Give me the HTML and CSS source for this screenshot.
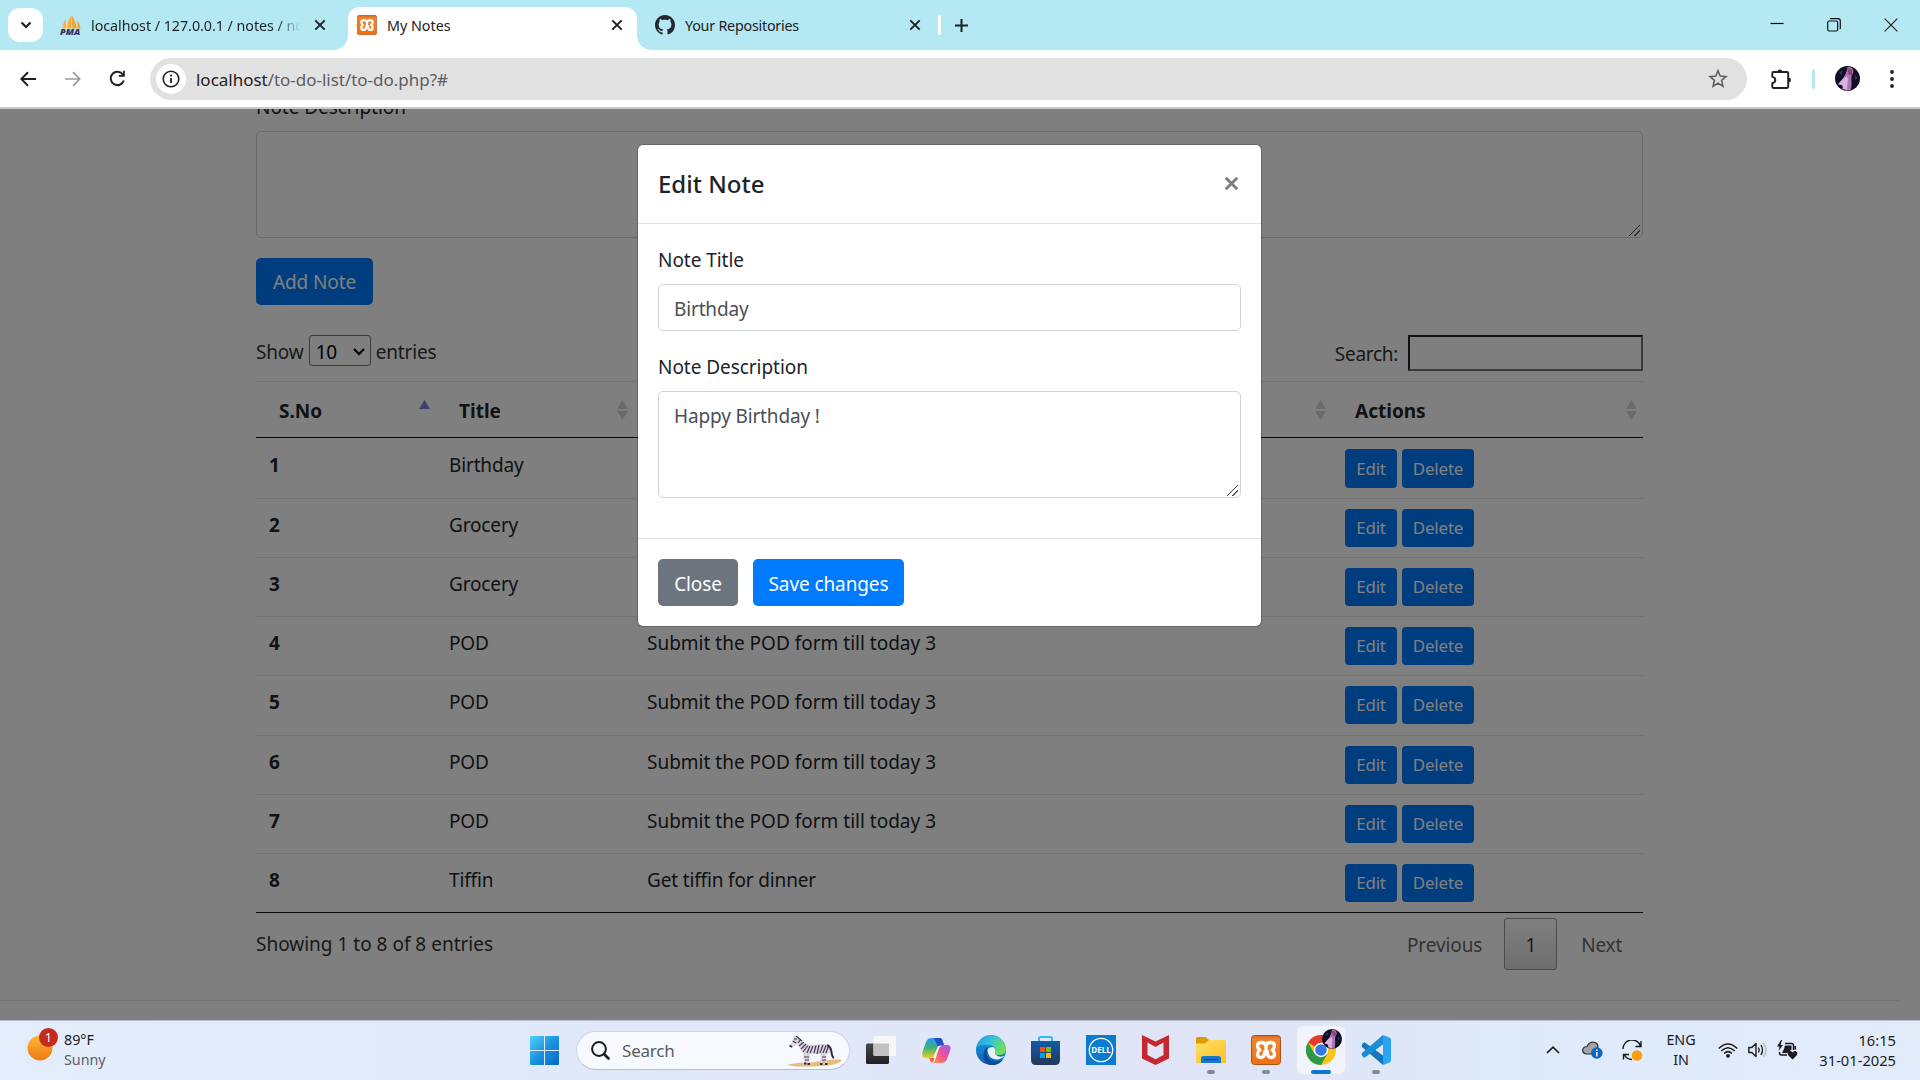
FILE: index.html
```html
<!DOCTYPE html>
<html lang="en">
<head>
<meta charset="utf-8">
<title>My Notes</title>
<link rel="stylesheet" href="styles.css">
</head>
<body>
<svg class="defs" width="0" height="0" aria-hidden="true">
  <defs>
    <linearGradient id="gOrange" x1="0" y1="0" x2="0" y2="1"><stop offset="0" stop-color="#c8672a"/><stop offset=".12" stop-color="#f0832f"/><stop offset="1" stop-color="#f3700f"/></linearGradient>
    <linearGradient id="gSail" x1="0" y1="0" x2="1" y2="0"><stop offset="0" stop-color="#f6e3c0"/><stop offset="1" stop-color="#f89c0e"/></linearGradient>
    <linearGradient id="gWin" x1="0" y1="0" x2="1" y2="1"><stop offset="0" stop-color="#4fd0fb"/><stop offset=".5" stop-color="#1a93e0"/><stop offset="1" stop-color="#0468c8"/></linearGradient>
    <linearGradient id="gCopA" x1="0" y1="0" x2="0" y2="1"><stop offset="0" stop-color="#1f9bf0"/><stop offset=".5" stop-color="#3fb274"/><stop offset="1" stop-color="#f5cf1c"/></linearGradient>
    <linearGradient id="gCopB" x1="1" y1="0" x2="0" y2="1"><stop offset="0" stop-color="#9a5cf0"/><stop offset=".55" stop-color="#f0568c"/><stop offset="1" stop-color="#ff9a4a"/></linearGradient>
    <linearGradient id="gEdge" x1="0" y1="0" x2="1" y2=".4"><stop offset="0" stop-color="#1b9de2"/><stop offset=".5" stop-color="#35c1d8"/><stop offset="1" stop-color="#6fe05c"/></linearGradient>
    <linearGradient id="gEdge2" x1="0" y1="0" x2="0" y2="1"><stop offset="0" stop-color="#1ba0e2"/><stop offset="1" stop-color="#0a5fc0"/></linearGradient>
    <linearGradient id="gStore" x1="0" y1="0" x2="0" y2="1"><stop offset="0" stop-color="#0f5cab"/><stop offset="1" stop-color="#253858"/></linearGradient>
    <linearGradient id="gFolder" x1="0" y1="0" x2="1" y2="1"><stop offset="0" stop-color="#ffdf6d"/><stop offset="1" stop-color="#fdc021"/></linearGradient>
    <linearGradient id="gDark" x1="0" y1="0" x2="0" y2="1"><stop offset="0" stop-color="#474747"/><stop offset="1" stop-color="#1f1f1f"/></linearGradient>
    <linearGradient id="gSun" x1="0" y1="0" x2="0" y2="1"><stop offset="0" stop-color="#fbb83a"/><stop offset="1" stop-color="#f07a10"/></linearGradient>
    <symbol id="xampp" viewBox="0 0 30 30">
      <rect x=".5" y=".5" width="29" height="29" rx="3" fill="url(#gOrange)" stroke="#a9541d"/>
      <path d="M15 10.500C13.500 6.500 6.500 6.500 6.500 11C6.500 13 7.500 14 8.800 15C7.500 16 6.500 17.500 6.500 19C6.500 23.500 12.500 23.500 13.300 19.500C13.300 17.500 13.800 16 15 16S16.700 17.500 16.700 19.500C17.500 23.500 23.500 23.500 23.500 19C23.500 17.500 22.500 16 21.200 15C22.500 14 23.500 13 23.500 11C23.500 6.500 16.500 6.500 15 10.500V13.500" fill="none" stroke="#fff" stroke-width="3.400" stroke-linecap="round" stroke-linejoin="round"/>
    </symbol>
    <symbol id="avatar" viewBox="0 0 24 24">
      <circle cx="12" cy="12" r="12" fill="#120f24"/>
      <path d="M12 1C18 0 19 6 16 9C15 13 17 17 15 23L10 24C11 19 8 18 3 18C6 13 11 10 12 1Z" fill="#a974b8"/>
      <path d="M11 10C14 11 11 18 12 23L7 22C9 18 5 18 3 17C6 15 8 11 11 10Z" fill="#dbb3dc"/>
      <path d="M12 3C15 1 18 5 16 9L13 8Z" fill="#8e4468"/>
      <path d="M19 8L22 12L19 13ZM4 6L8 4L6 9Z" fill="#2d3368"/>
    </symbol>
    <symbol id="cross" viewBox="0 0 12 12"><path d="M1.300 1.300L10.700 10.700M10.700 1.300L1.300 10.700" stroke="#1f2023" stroke-width="1.900" fill="none"/></symbol>
  </defs>
</svg>

<div class="screen">
  <header class="tabstrip">
    <button class="tab-search"><svg width="12" height="8" viewBox="0 0 12 8"><path d="M1.500 1.500L6 6L10.500 1.500" fill="none" stroke="#1f2023" stroke-width="2.200"/></svg></button>
    <div class="tab tab-pma">
      <svg class="fav" width="21" height="21" viewBox="0 0 21 21"><path d="M8 1L1.500 13.500H8Z" fill="url(#gSail)" transform="translate(3 0)"/><path d="M5.500 4L1 13.500H5.500Z" fill="url(#gSail)"/><path d="M11.500 0L12.500 13.500H17C16 9 14 4 11.500 0ZM17 5L18 13.500H20.500C20 10 19 7 17 5Z" fill="#f5a02c"/><text x="0" y="20" class="pma" textLength="20" lengthAdjust="spacingAndGlyphs">PMA</text></svg>
      <span class="tab-title fade">localhost / 127.0.0.1 / notes / notes</span>
      <svg class="tab-x" width="12" height="12"><use href="#cross"/></svg>
    </div>
    <div class="tab tab-active">
      <svg class="fav" width="20" height="20"><use href="#xampp"/></svg>
      <span class="tab-title">My Notes</span>
      <svg class="tab-x" width="12" height="12"><use href="#cross"/></svg>
    </div>
    <div class="tab tab-git">
      <svg class="fav" width="20" height="20" viewBox="0 0 16 16"><path fill="#24292f" d="M8 0C3.580 0 0 3.580 0 8c0 3.540 2.290 6.530 5.470 7.590.4.070.55-.17.55-.38 0-.19-.01-.82-.01-1.490-2.010.37-2.530-.49-2.690-.94-.09-.23-.48-.94-.82-1.130-.28-.15-.68-.52-.01-.53.63-.01 1.080.58 1.230.82.72 1.210 1.870.87 2.330.66.07-.52.28-.87.51-1.070-1.780-.2-3.640-.89-3.640-3.950 0-.87.31-1.590.82-2.150-.08-.2-.36-1.020.08-2.120 0 0 .67-.21 2.200.82.64-.18 1.320-.27 2-.27s1.360.09 2 .27c1.530-1.040 2.200-.82 2.200-.82.44 1.100.16 1.920.08 2.120.51.56.82 1.270.82 2.150 0 3.070-1.870 3.750-3.650 3.950.29.25.54.73.54 1.480 0 1.070-.01 1.930-.01 2.200 0 .21.15.46.55.38A8.010 8.010 0 0 0 16 8c0-4.420-3.580-8-8-8z"/></svg>
      <span class="tab-title">Your Repositories</span>
      <svg class="tab-x" width="12" height="12"><use href="#cross"/></svg>
    </div>
    <i class="tab-sep"></i>
    <svg class="new-tab" width="13" height="13" viewBox="0 0 13 13"><path d="M6.500 0V13M0 6.500H13" stroke="#1f2023" stroke-width="2"/></svg>
    <div class="win-controls">
      <svg width="14" height="14" viewBox="0 0 14 14"><path d="M.5 5.500H13.500" stroke="#000" stroke-width="1.200"/></svg>
      <svg width="14" height="14" viewBox="0 0 14 14"><rect x=".7" y="3" width="10" height="10" rx="1.500" fill="none" stroke="#111" stroke-width="1.200"/><path d="M3 .7H11Q13.300 .7 13.300 3V11" fill="none" stroke="#111" stroke-width="1.200"/></svg>
      <svg width="14" height="14" viewBox="0 0 14 14"><path d="M.7 .7L13.300 13.300M13.300 .7L.7 13.300" stroke="#222" stroke-width="1.200"/></svg>
    </div>
  </header>

  <nav class="toolbar">
    <svg class="nav-back" width="16" height="16" viewBox="0 0 16 16"><path d="M16 8H1.500M8 1.200L1.300 8L8 14.800" fill="none" stroke="#1f2023" stroke-width="2"/></svg>
    <svg class="nav-fwd" width="16" height="16" viewBox="0 0 16 16"><path d="M0 8H14.500M8 1.200L14.700 8L8 14.800" fill="none" stroke="#9b9b9b" stroke-width="1.700"/></svg>
    <svg class="nav-reload" width="17" height="17" viewBox="0 0 17 17"><path d="M14.800 10.500A6.700 6.700 0 1 1 14 4.700" fill="none" stroke="#1f2023" stroke-width="2"/><path d="M15.800 .8V6.800H9.800V5H14V.8Z" fill="#1f2023"/></svg>
    <div class="omnibox">
      <span class="site-info"><svg width="18" height="18" viewBox="0 0 18 18"><circle cx="9" cy="9" r="7.800" fill="none" stroke="#1f2023" stroke-width="1.600"/><path d="M9 8V13" stroke="#1f2023" stroke-width="1.800"/><circle cx="9" cy="5.500" r="1.100" fill="#1f2023"/></svg></span>
      <span class="url"><b>localhost</b>/to-do-list/to-do.php?#</span>
      <svg class="star" width="20" height="20" viewBox="0 0 20 20"><path d="M10 1.800L12.200 7.100L18 7.600L13.600 11.400L14.900 17.200L10 14.100L5.100 17.200L6.400 11.400L2 7.600L7.800 7.100Z" fill="none" stroke="#5f6062" stroke-width="1.600"/></svg>
    </div>
    <svg class="puzzle" width="22" height="22" viewBox="0 0 22 22"><path d="M3.500 4H17Q18.200 4 18.200 5.200V18.800Q18.200 20 17 20H3.500Q2.300 20 2.300 18.800V15.200Q5.300 14.500 5.300 12T2.300 8.700V5.200Q2.300 4 3.500 4Z" fill="none" stroke="#1f2023" stroke-width="1.900"/><path d="M7.300 4A2.500 2.500 0 0 1 12.300 4ZM18.500 9.400A2.500 2.500 0 0 1 18.500 14.400Z" fill="#1f2023"/></svg>
    <i class="tool-sep"></i>
    <svg class="profile" width="25" height="25"><use href="#avatar"/></svg>
    <svg class="dots" width="4" height="18" viewBox="0 0 4 18"><circle cx="2" cy="2" r="1.900"/><circle cx="2" cy="9" r="1.900"/><circle cx="2" cy="16" r="1.900"/></svg>
  </nav>

  <main class="viewport">
    <div class="page">
      <section class="container">
        <label class="label">Note Description</label>
        <textarea class="control area"></textarea>
        <button class="btn primary add">Add Note</button>
        <div class="table-tools">
          <div class="length">Show <span class="select">10<svg width="12" height="8" viewBox="0 0 12 8"><path d="M1 1L6 6L11 1" fill="none" stroke="#000" stroke-width="2.200"/></svg></span> entries</div>
          <div class="filter"><span>Search:</span><input type="text"></div>
        </div>
        <table>
          <colgroup><col class="c1"><col class="c2"><col class="c3"><col class="c4"></colgroup>
          <thead>
            <tr>
              <th><div>S.No<svg class="sort" width="11" height="20" viewBox="0 0 11 20"><path d="M0 9L5.500 0L11 9Z" fill="#8080e0"/></svg></div></th>
              <th><div>Title<svg class="sort" width="11" height="20" viewBox="0 0 11 20"><path d="M0 9L5.500 0L11 9ZM0 11L5.500 20L11 11Z" fill="#d4d4d4"/></svg></div></th>
              <th><div>Description<svg class="sort" width="11" height="20" viewBox="0 0 11 20"><path d="M0 9L5.500 0L11 9ZM0 11L5.500 20L11 11Z" fill="#d4d4d4"/></svg></div></th>
              <th><div>Actions<svg class="sort" width="11" height="20" viewBox="0 0 11 20"><path d="M0 9L5.500 0L11 9ZM0 11L5.500 20L11 11Z" fill="#d4d4d4"/></svg></div></th>
            </tr>
          </thead>
          <tbody>
            <tr><td><b>1</b></td><td>Birthday</td><td>Happy Birthday !</td><td class="act"><button class="btn sm primary">Edit</button><button class="btn sm primary del">Delete</button></td></tr>
            <tr><td><b>2</b></td><td>Grocery</td><td></td><td class="act"><button class="btn sm primary">Edit</button><button class="btn sm primary del">Delete</button></td></tr>
            <tr><td><b>3</b></td><td>Grocery</td><td></td><td class="act"><button class="btn sm primary">Edit</button><button class="btn sm primary del">Delete</button></td></tr>
            <tr><td><b>4</b></td><td>POD</td><td>Submit the POD form till today 3</td><td class="act"><button class="btn sm primary">Edit</button><button class="btn sm primary del">Delete</button></td></tr>
            <tr><td><b>5</b></td><td>POD</td><td>Submit the POD form till today 3</td><td class="act"><button class="btn sm primary">Edit</button><button class="btn sm primary del">Delete</button></td></tr>
            <tr><td><b>6</b></td><td>POD</td><td>Submit the POD form till today 3</td><td class="act"><button class="btn sm primary">Edit</button><button class="btn sm primary del">Delete</button></td></tr>
            <tr><td><b>7</b></td><td>POD</td><td>Submit the POD form till today 3</td><td class="act"><button class="btn sm primary">Edit</button><button class="btn sm primary del">Delete</button></td></tr>
            <tr><td><b>8</b></td><td>Tiffin</td><td>Get tiffin for dinner</td><td class="act"><button class="btn sm primary">Edit</button><button class="btn sm primary del">Delete</button></td></tr>
          </tbody>
        </table>
        <div class="table-foot">
          <span>Showing 1 to 8 of 8 entries</span>
          <div class="pager"><span class="pg">Previous</span><span class="pg current">1</span><span class="pg next">Next</span></div>
        </div>
      </section>
      <div class="rule"></div>
    </div>
    <div class="backdrop">
      <div class="modal">
        <div class="modal-head"><h5>Edit Note</h5><svg width="15" height="15" viewBox="0 0 14 14"><path d="M1.600 1.600L12.400 12.400M12.400 1.600L1.600 12.400" stroke="#7f7f7f" stroke-width="2.800"/></svg></div>
        <div class="modal-body">
          <label class="label">Note Title</label>
          <input class="control" type="text" value="Birthday">
          <label class="label second">Note Description</label>
          <textarea class="control area">Happy Birthday !</textarea>
        </div>
        <div class="modal-foot"><button class="btn secondary">Close</button><button class="btn primary save">Save changes</button></div>
      </div>
    </div>
  </main>

  <footer class="taskbar">
    <div class="weather">
      <div class="sun"><svg width="26" height="26" viewBox="0 0 26 26"><circle cx="13" cy="13" r="12.500" fill="url(#gSun)"/></svg><span class="badge">1</span></div>
      <div class="wtext"><span>89°F</span><span class="dim">Sunny</span></div>
    </div>
    <div class="apps">
      <svg class="a-win" width="29" height="29" viewBox="0 0 29 29"><path d="M1 0H14V14H0V1Q0 0 1 0ZM15 0H28Q29 0 29 1V14H15ZM0 15H14V29H1Q0 29 0 28ZM15 15H29V28Q29 29 28 29H15Z" fill="url(#gWin)"/></svg>
      <div class="search">
        <svg width="19" height="19" viewBox="0 0 19 19"><circle cx="8" cy="8" r="6.900" fill="none" stroke="#1b1b1b" stroke-width="2"/><path d="M13 13L17.500 17.500" stroke="#1b1b1b" stroke-width="2.600" stroke-linecap="round"/></svg>
        <span>Search</span>
        <svg class="zebra" width="55" height="33" viewBox="0 0 55 33">
          <path d="M0 30.500Q10 28 24 28.500Q38 25 53 25.500Q55 28 46 30.500Q30 33 10 32.500Q1 32 0 30.500Z" fill="#e6bc7d"/>
          <path d="M7 1L10 3Q14 6 17 10Q25 12 33 10Q40 9 42 15Q46 20 45 24L42 18Q40 20 38 21L39 30H37L35 22L34 30H32L33 20H22L21 30H19L19 22L18 30H16L15 19Q12 15 10 10L5 13Q2 14 2 12L5 5Q5 2 7 1Z" fill="#dcd5df"/>
          <path d="M8 2L14 7M10 9L13 5M11 12L16 8M13 15L18 10M15 18L20 11.500M19 19L22 12M22 19L25 12M26 19L28 11.500M29 20L31 11M32 19L35 11M35 19L38 11.500M38 19L40 13M16 23H21M17 26H21M34 23H38M34 26H38M5 7L8 9M6 5L9 5" stroke="#3e3750" stroke-width="1.200" fill="none"/>
          <path d="M39 11Q43 13 43.500 18T46 24M1.500 11.500L4 13M16 29.500H18.500M19.500 30H22M32 30H34.500M37 30H39.500" stroke="#332d46" stroke-width="2" fill="none"/>
        </svg>
      </div>
      <svg class="a-view" width="30" height="28" viewBox="0 0 30 28"><rect y="7.500" width="23" height="20.500" rx="1.500" fill="url(#gDark)"/><rect x="7.500" width="22.500" height="20" rx="1.500" fill="#f7f7f7"/><path d="M7.500 7.500H23V20H9Q7.500 20 7.500 18.500Z" fill="#c2c2c2"/></svg>
      <svg class="a-cop" width="29" height="27" viewBox="0 0 29 27"><path d="M17 6L15 13Q12 23 11 25Q9 27 7.500 22L6 18L10 9Z" fill="#f46a4e"/><path d="M10 1H18Q20 1 21 5L22 8H19Q17 8 16 11L14 18Q13 21 9 21H4Q-1 21 .5 15L4 5Q5.500 1 10 1Z" fill="url(#gCopA)"/><path d="M12 1H18Q20 1 21 5L22 8H19Q17 8 16 10Z" fill="#2350c8"/><path d="M19 26H11Q13 25 14 20L16 12Q17 8 20 8H25Q30 8 28 14L25 22Q23.500 26 19 26Z" fill="url(#gCopB)"/><path d="M16 9H19Q17 10 14 20L13 21H11Z" fill="#fff" opacity=".85"/></svg>
      <svg class="a-edge" width="30" height="30" viewBox="0 0 30 30"><circle cx="15" cy="15" r="15" fill="url(#gEdge2)"/><path d="M.5 12A15 15 0 0 1 30 14Q30 20 23 20Q18 20 19 17Q20 10 13 10Q5 9 .5 12Z" fill="url(#gEdge)"/><path d="M12 12Q8 22 16 26Q22 28 27.500 24Q22 32 13 29.500Q5 25 8 17Q9 13 12 12Z" fill="#0c4a94"/><path d="M17 12Q10 12 12 18Q14 25 22 24.500Q26 24 29 20.500Q24 23 20 20Q18.500 19 19 17Q20 14 17 12Z" fill="#eaf0fb"/></svg>
      <svg class="a-store" width="29" height="29" viewBox="0 0 29 29"><path d="M8 7V2.500Q8 1 9.500 1H19.500Q21 1 21 2.500V7" fill="none" stroke="#35b8f1" stroke-width="2"/><path d="M0 5H29V24Q29 29 24 29H5Q0 29 0 24Z" fill="url(#gStore)"/><path d="M9 11H14V16H9Z" fill="#f25022"/><path d="M15 11H20V16H15Z" fill="#7fba00"/><path d="M9 17H14V22H9Z" fill="#00a4ef"/><path d="M15 17H20V22H15Z" fill="#ffb900"/></svg>
      <svg class="a-dell" width="30" height="30" viewBox="0 0 30 30"><rect width="30" height="30" fill="#0a7bd1"/><circle cx="15" cy="15" r="11.700" fill="none" stroke="#fff" stroke-width="1.300"/><text x="15" y="18" class="dell">DELL</text></svg>
      <svg class="a-mc" width="27" height="30" viewBox="0 0 27 30"><path d="M0 0L13.500 6.500L27 0V23.500L13.500 30L0 23.500ZM5.500 7.500V20L13.500 24.200L21.500 20V7.500L13.500 12Z" fill="#c5282f"/></svg>
      <div class="app a-exp"><svg width="30" height="30" viewBox="0 0 30 30"><path d="M0 3.500Q0 2 1.500 2H9.500L13 5V9H0Z" fill="#dc9b04"/><path d="M0 8.500L9 8.500L13 5H28.500Q30 5 30 6.500V26.500Q30 28 28.500 28H1.500Q0 28 0 26.500Z" fill="url(#gFolder)"/><path d="M5 28V23.500Q5 21 7.500 21H22.500Q25 21 25 23.500V28Z" fill="#1777cb"/><path d="M8 24.500H22" stroke="#0b4c8c" stroke-width="1.200"/></svg><i></i></div>
      <div class="app a-xam"><svg width="30" height="30"><use href="#xampp"/></svg><i></i></div>
      <div class="app active"><svg width="36" height="36" viewBox="0 0 36 36"><circle cx="15" cy="21" r="15" fill="#f9c31b"/><path d="M15 21L2 13.500A15 15 0 0 1 28 13.500H15Z" fill="#e33b2e"/><path d="M2 13.500A15 15 0 0 0 15 36L21.500 24.800L15 21L8.500 24.800Z" fill="#2a9a48"/><circle cx="15" cy="21" r="7.200" fill="#fff"/><circle cx="15" cy="21" r="5.800" fill="#3479ea"/><use href="#avatar" x="16" y="0" width="20" height="20"/></svg><i></i></div>
      <div class="app a-vs"><svg width="30" height="30" viewBox="0 0 30 30"><path d="M1.500 8.500L3.500 7.300L22 20.500V30L1 12Q0 10.500 1.500 8.500Z" fill="#1277bb"/><path d="M1.500 21.500L3.500 22.700L22 9.500V0L1 18Q0 19.500 1.500 21.500Z" fill="#1a8dd6"/><path d="M22 0L28.500 2.500Q30 3.300 30 5V25Q30 26.700 28.500 27.500L22 30Z" fill="#2aa5f4"/></svg><i></i></div>
    </div>
    <div class="tray">
      <svg class="t-chev" width="14" height="8" viewBox="0 0 14 8"><path d="M1 7L7 1.200L13 7" fill="none" stroke="#1b1b1b" stroke-width="1.700"/></svg>
      <svg class="t-cloud" width="21" height="18" viewBox="0 0 21 18"><path d="M4 13Q0 12 .8 8.500Q1.500 5.500 5 5.500Q8 0 13 1.500Q16 2.500 16 6L9 13Z" fill="#a5a5a5" stroke="#333" stroke-width="1.200"/><circle cx="14.800" cy="12" r="5.800" fill="#0a66c2"/><path d="M14.800 11V15.500M14.800 8.500V10" stroke="#fff" stroke-width="1.500"/></svg>
      <svg class="t-sync" width="21" height="21" viewBox="0 0 21 21"><path d="M1 9A9 9 0 0 1 18.500 6M19 1V6.500H13.500M10 19.500A9 9 0 0 1 2 14M1.500 19.500V14.500H7" fill="none" stroke="#1b1b1b" stroke-width="1.400"/><circle cx="15" cy="15.500" r="5.300" fill="#ff9d0a"/></svg>
      <div class="lang"><span>ENG</span><span>IN</span></div>
      <svg class="t-wifi" width="20" height="15" viewBox="0 0 20 15"><path d="M.7 5.500Q10 -3.500 19.300 5.500M3.300 8Q10 1.500 16.700 8M6 10.500Q10 6.800 14 10.500" fill="none" stroke="#1b1b1b" stroke-width="1.500"/><circle cx="10" cy="12.800" r="1.900" fill="#1b1b1b"/></svg>
      <svg class="t-vol" width="20" height="16" viewBox="0 0 20 16"><path d="M.8 5.500H3.800L8 1.500V14.500L3.800 10.500H.8Z" fill="none" stroke="#1b1b1b" stroke-width="1.400" stroke-linejoin="round"/><path d="M10.500 5.500Q12 8 10.500 10.500M13 3Q16 8 13 13" fill="none" stroke="#1b1b1b" stroke-width="1.400"/><path d="M15.500 1Q20.500 8 15.500 15" fill="none" stroke="#b4bcc9" stroke-width="1.400"/></svg>
      <svg class="t-bat" width="21" height="20" viewBox="0 0 21 20"><path d="M8 3.500H14.500Q16.500 3.500 16.500 5.500V10M18.300 6V9.500M2.500 12V13Q2.500 15 4.500 15H10" fill="none" stroke="#1b1b1b" stroke-width="1.500"/><path d="M8 5.500H14.500V9.500L10.500 13H5L7 9Z" fill="#1b1b1b"/><path d="M4 0L0 6.500H2.500L1.500 11L6 5H3.500L5 0Z" fill="#1b1b1b"/><path d="M15.500 19.500L11 15Q10 12 12.500 11Q14.500 10.500 15.500 12.500Q16.500 10.500 18.500 11Q21 12 20 15Z" fill="#1b1b1b"/></svg>
      <div class="clock"><span>16:15</span><span>31-01-2025</span></div>
    </div>
  </footer>
</div>
</body>
</html>
```

FILE: styles.css
```css
* { box-sizing: border-box; }
body { margin: 0; font-family: "Noto Sans", "Open Sans", sans-serif; color: #212529; overflow: hidden; }
svg { display: block; flex: none; }
button { font: inherit; border: 0; padding: 0; }
.defs { position: absolute; }
.screen { width: 1920px; height: 1080px; display: flex; flex-direction: column; overflow: hidden; }

/* Tab strip */
.tabstrip { height: 50px; flex: none; background: #b4e8f2; display: flex; align-items: flex-start; padding-left: 8px; }
.tab-search { width: 35px; height: 34px; margin-top: 8px; border-radius: 12px; background: #fff; display: grid; place-items: center; }
.tab { height: 43px; margin-top: 7px; display: flex; align-items: center; padding-bottom: 7px; font-size: 14.300px; color: #1f2023; }
.tab-pma { width: 305px; padding-left: 17px; padding-top: 0; letter-spacing: -.04px; }
.tab-title { margin-left: 10px; white-space: nowrap; overflow: hidden; flex: 1; padding-top: 1px; }
.fade { flex: none; width: 210px; -webkit-mask-image: linear-gradient(90deg, #000 88%, transparent); mask-image: linear-gradient(90deg, #000 88%, transparent); }
.fade + .tab-x { margin-left: 13px; }
.pma { font: italic 800 8.500px "Open Sans", sans-serif; fill: #34336b; }
.tab-active { position: relative; width: 289px; background: #fff; border-radius: 12px 12px 0 0; padding-left: 9px; padding-right: 14px; }
.tab-active::before, .tab-active::after { content: ""; position: absolute; bottom: 0; width: 14px; height: 14px; }
.tab-active::before { left: -14px; background: radial-gradient(circle at 0 0, #b4e8f2 13.500px, #fff 14px); }
.tab-active::after { right: -14px; background: radial-gradient(circle at 100% 0, #b4e8f2 13.500px, #fff 14px); }
.tab-git { width: 301px; padding-left: 18px; padding-right: 17px; letter-spacing: -.22px; }
.tab-sep { width: 3px; height: 20px; background: #fff; border-radius: 2px; margin-top: 15px; }
.new-tab { margin: 19px 0 0 14px; }
.win-controls { margin-left: auto; margin-right: 22px; margin-top: 18px; display: flex; gap: 43px; }

/* Toolbar */
.toolbar { height: 59px; flex: none; background: #fff; border-bottom: 2px solid #c9cac9; display: flex; align-items: center; padding-left: 20px; }
.nav-fwd { margin-left: 29px; }
.nav-reload { margin-left: 28px; }
.omnibox { width: 1597px; height: 42px; margin-left: 24px; border-radius: 21px; background: #e1e1e1; display: flex; align-items: center; padding: 0 19px 0 6px; }
.site-info { width: 30px; height: 30px; border-radius: 50%; background: #fff; display: grid; place-items: center; }
.url { margin-left: 10px; padding-top: 1px; font-size: 17px; color: #5c5d60; flex: 1; letter-spacing: -.02px; }
.url b { font-weight: 400; color: #1f2023; }
.puzzle { margin-left: 23px; }
.tool-sep { width: 3px; height: 20px; margin-left: 20px; background: #b4e8f2; border-radius: 2px; }
.profile { margin-left: 20px; }
.dots { margin-left: 30px; fill: #1f2023; }

/* Notes page */
.viewport { height: 911px; flex: none; position: relative; overflow: hidden; background: #fff; }
.page { width: 1899px; font-size: 19px; line-height: 30px; }
.container { width: 1387px; margin: -18px auto 0; }
.label { display: block; font-size: 19px; line-height: 30px; padding-top: 1px; height: 30px; letter-spacing: -.05px; }
.control { display: block; width: 100%; height: 47px; border: 1px solid #ced4da; border-radius: 5px; background: #fff; padding: 8px 15px 6px; font: 19px/30px "Noto Sans", "Open Sans", sans-serif; letter-spacing: -.15px; color: #495057; outline: 0; margin-top: 10px; }
.area { height: 107px; resize: vertical; padding-top: 9px; }
.area::-webkit-resizer { background: linear-gradient(135deg, transparent 46%, #444 47%, #444 53%, transparent 54%, transparent 70%, #444 71%, #444 77%, transparent 78%) 2px 3px / 11px 11px no-repeat; }
.btn { display: inline-flex; align-items: center; justify-content: center; height: 47px; border-radius: 5px; color: #fff; font-size: 19px; line-height: 30px; padding-top: 1px; white-space: nowrap; letter-spacing: -.1px; }
.primary { background: #007bff; }
.secondary { background: #6c757d; }
.add { width: 117px; margin-top: 20px; display: flex; padding-top: 0; }
.table-tools { height: 46px; margin-top: 30px; display: flex; justify-content: space-between; color: #333; }
.length { display: flex; height: 31px; align-items: center; gap: 5px; padding-top: 2px; letter-spacing: -.15px; }
.select { width: 62px; height: 31px; margin-top: -2px; border: 1px solid #767676; border-radius: 3px; color: #000; display: flex; align-items: center; justify-content: space-between; padding: 2px 5px 0 6px; }
.filter { display: flex; height: 36px; align-items: center; gap: 10px; letter-spacing: -.3px; }
.filter span { padding-top: 2px; }
.filter input { width: 235px; height: 36px; border: 2px solid; border-color: #222 #777 #777 #222; background: #fff; padding: 0; }
table { width: 1387px; table-layout: fixed; border-collapse: separate; border-spacing: 0; }
.c1 { width: 180px; } .c2 { width: 198px; } .c3 { width: 698px; } .c4 { width: 311px; }
th { height: 57px; padding: 0; border-top: 1px solid #dee2e6; border-bottom: 1px solid #111; text-align: left; font-weight: 700; }
th div { display: flex; align-items: center; justify-content: space-between; padding: 3px 6px 0 23px; }
.sort { margin-top: -2px; }
td { height: 59px; padding: 11px 0 0 13px; border-top: 1px solid #dee2e6; vertical-align: top; line-height: 30px; white-space: nowrap; }
td:nth-child(2) { letter-spacing: -.15px; }
tr:first-child td { height: 60px; border-top-color: #fff; }
tr:nth-child(5) td { height: 60px; }
tr:last-child td { height: 60px; border-bottom: 1px solid #111; }
tr:last-child td:nth-child(3) { letter-spacing: -.15px; }
td.act { padding-top: 10px; letter-spacing: 0; }
.sm { width: 52px; height: 38px; font-size: 16.900px; border-radius: 4px; vertical-align: top; padding-top: 0; letter-spacing: -.15px; }
tr:first-child .sm { height: 39px; }
.del { width: 72px; margin-left: 5px; }
.table-foot { display: flex; justify-content: space-between; height: 87px; color: #333; padding-top: 5px; }
.table-foot > span { padding-top: 11px; }
.pager { display: flex; }
.pg { height: 52px; display: grid; place-items: center; color: #666; padding: 1px 22px 0 0; letter-spacing: -.1px; }
.current { width: 53px; padding: 1px 0 0; border: 1px solid #979797; border-radius: 3px; color: #333; background: linear-gradient(#fff, #dcdcdc); }
.next { padding: 1px 21px 0 24px; letter-spacing: -.25px; }
.rule { height: 1px; background: #e5e5e5; }

/* Dialog over the page */
.backdrop { position: absolute; inset: 0; background: rgba(0,0,0,.5); padding-right: 21px; padding-top: 35px; }
.modal { width: 625px; margin: 0 auto; background: #fff; background-clip: padding-box; border: 1px solid rgba(0,0,0,.2); border-radius: 6px; font-size: 19px; line-height: 30px; }
.modal-head { height: 79px; border-bottom: 1px solid #dee2e6; display: flex; justify-content: space-between; padding: 20px 22px 0 20px; }
.modal-head h5 { margin: 0; font-size: 24px; line-height: 38px; font-weight: 500; }
.modal-head svg { margin-top: 11px; }
.modal-body { padding: 20px 20px 40px; }
.second { margin-top: 20px; }
.modal-foot { border-top: 1px solid #dee2e6; padding: 20px; display: flex; gap: 15px; }
.modal-foot .btn { width: 80px; padding-top: 2px; }
.modal-foot .save { width: 151px; }

/* Taskbar */
.taskbar { height: 60px; flex: none; background: linear-gradient(90deg, #e3edfb, #dfe8f9 35%, #dfe5f7 65%, #deeafa 80%, #e2ebfa); border-top: 1px solid #b9bcca; display: flex; position: relative; }
.weather { display: flex; width: 530px; padding-left: 27px; font-size: 14.300px; color: #1b1b1b; }
.sun { position: relative; padding-top: 14px; width: 37px; }
.badge { position: absolute; left: 12px; top: 7px; width: 19px; height: 19px; border-radius: 50%; background: #c42b1c; color: #fff; font-size: 12px; line-height: 19px; text-align: center; }
.wtext, .clock, .lang { display: flex; flex-direction: column; line-height: 20px; padding-top: 9px; }
.dim { color: #5c6068; }
.apps { display: flex; align-items: center; height: 58px; }
.search { width: 274px; height: 39px; margin-left: 17px; border-radius: 20px; background: #f6f9fe; border: 1px solid #ccd6e8; border-bottom-color: #b5bfd2; display: flex; align-items: center; padding: 0 6px 0 14px; font-size: 17px; letter-spacing: -.2px; color: #5a5c60; }
.search span { margin-left: 12px; flex: 1; }
.a-view { margin-left: 16px; } .a-cop { margin-left: 26px; } .a-edge { margin-left: 25px; } .a-store { margin-left: 25px; } .a-dell { margin-left: 26px; } .a-mc { margin-left: 26px; }
.dell { font: 700 8px "Open Sans", sans-serif; fill: #fff; text-anchor: middle; }
.app { position: relative; }
.app i { position: absolute; left: 11px; top: 35px; width: 8px; height: 4px; border-radius: 2px; background: #858992; }
.a-exp { margin-left: 27px; } .a-xam { margin-left: 25px; } .a-vs { margin-left: 16px; }
.active { width: 48px; height: 48px; margin-left: 16px; border-radius: 6px; background: #f1f4fc; box-shadow: 0 0 0 1px #e4e8f3; padding: 3px 0 0 9px; }
.active i { left: 14px; top: 44px; width: 20px; background: #0c76d3; }
.tray { display: flex; align-items: center; height: 58px; margin-left: auto; padding-right: 24px; font-size: 14.300px; color: #1b1b1b; }
.t-cloud { margin-left: 22px; } .t-sync { margin-left: 19px; }
.lang { margin-left: 22px; width: 32px; text-align: center; align-items: center; height: 58px; }
.t-wifi { margin-left: 21px; } .t-vol { margin-left: 10px; } .t-bat { margin-left: 9px; }
.clock { width: 98px; text-align: right; height: 58px; align-items: flex-end; font-size: 14.700px; }
```
